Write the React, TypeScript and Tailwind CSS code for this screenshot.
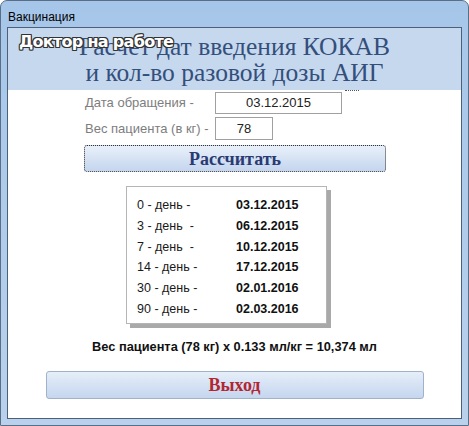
import React from "react";

const schedule = [
  { day: "0 - день -", date: "03.12.2015" },
  { day: "3 - день  -", date: "06.12.2015" },
  { day: "7 - день  -", date: "10.12.2015" },
  { day: "14 - день -", date: "17.12.2015" },
  { day: "30 - день -", date: "02.01.2016" },
  { day: "90 - день -", date: "02.03.2016" },
];

const sans = "font-['Liberation_Sans',Arial,sans-serif]";
const serif = "font-['Liberation_Serif','Times_New_Roman',serif]";

const App = () => {
  return (
    <div className="w-[469px] h-[426px] bg-white">
      <div className="w-[469px] h-[426px] flex flex-col rounded-t-[7px] border border-[#5a6e86] bg-gradient-to-b from-[#a6c6e9] to-[#b9d1ec]">
        {/* title bar */}
        <div className={`h-[26px] flex items-center pl-[7px] pt-[6px] text-[12px] text-black ${sans}`}>
          Вакцинация
        </div>

        {/* client area */}
        <div className="mx-[6px] h-[392px] flex flex-col border border-[#4d6079] bg-white">
          {/* header band */}
          <div className="relative h-[62px] bg-[#c6d8ee] flex flex-col items-center pt-[6px]">
            <div className={`text-[25.5px] leading-[26px] text-[#344f7b] text-center ${serif}`}>
              <div>Расчет дат введения КОКАВ</div>
              <div>и кол-во разовой дозы АИГ</div>
            </div>
            <div className="absolute left-[11px] top-[2px] text-[16px] font-bold tracking-[-0.7px] text-white font-['DejaVu_Sans',Verdana,sans-serif] [text-shadow:-1px_-1px_0_#333,1px_-1px_0_#333,-1px_1px_0_#333,1px_1px_0_#333,0_1px_0_#333,0_-1px_0_#333,1px_0_0_#333,-1px_0_0_#333]">
              Доктор на работе
            </div>
          </div>

          {/* form */}
          <div className={`relative flex flex-col pl-[77px] pt-[2px] text-[13px] ${sans}`}>
            <div className="absolute left-[337px] top-0 w-[14px] border-t border-dotted border-[#555]" />
            <div className="flex items-center h-[22px]">
              <span className="w-[130px] text-[#7d7d7d]">Дата обращения -</span>
              <div className="w-[127px] h-[22px] border border-[#a0a0a0] flex items-center justify-center text-[#222]">
                03.12.2015
              </div>
            </div>
            <div className="flex items-center h-[23px] mt-[3px]">
              <span className="w-[130px] text-[#7d7d7d]">Вес пациента (в кг) -</span>
              <div className="w-[58px] h-[23px] border border-[#a0a0a0] flex items-center justify-center text-[#222]">
                78
              </div>
            </div>
            <button className={`mt-[5px] -ml-[1px] w-[302px] h-[27px] rounded-[3px] border border-dotted border-[#333] bg-gradient-to-b from-[#e9f0fa] to-[#c4d5ee] text-[18px] font-bold text-[#2a3a72] ${serif}`}>
              Рассчитать
            </button>
          </div>

          {/* results */}
          <div className="flex pl-[118px] mt-[14px]">
            <div className={`w-[201px] h-[138px] border border-[#b5b5b5] bg-white shadow-[4px_4px_0_#a9a9a9] pt-[8px] pl-[10px] ${sans}`}>
              {schedule.map((row) => (
                <div key={row.day} className="flex items-center h-[20.8px] text-[12.5px]">
                  <span className="w-[99px] text-[#1a1a1a] whitespace-pre">{row.day}</span>
                  <span className="font-bold text-[#111]">{row.date}</span>
                </div>
              ))}
            </div>
          </div>

          <div className={`mt-[13px] text-center text-[12.8px] font-bold text-[#111] ${sans}`}>
            Вес пациента (78 кг) x 0.133 мл/кг = 10,374 мл
          </div>

          <div className="flex justify-center mt-[15px]">
            <button className={`w-[378px] h-[28px] rounded-[3px] border border-[#9fb2c9] bg-gradient-to-b from-[#e6eef9] to-[#c5d6ee] text-[18px] font-bold text-[#b22633] ${serif}`}>
              Выход
            </button>
          </div>
        </div>
      </div>
    </div>
  );
};

export default App;
